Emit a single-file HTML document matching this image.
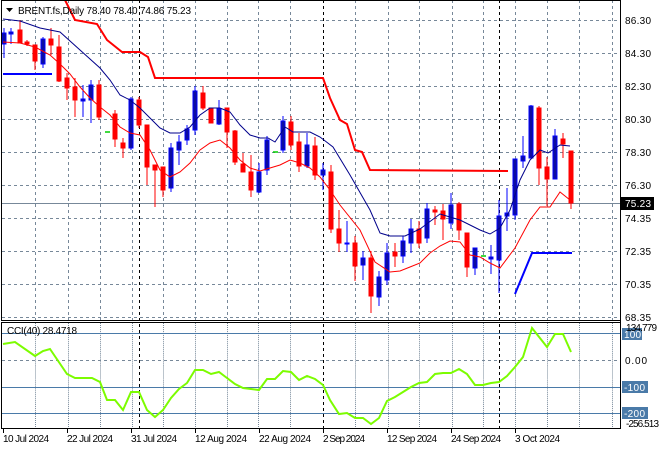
<!DOCTYPE html><html><head><style>
body{margin:0;background:#fff;}
svg{display:block;font-family:"Liberation Sans",sans-serif;font-size:10px;}
</style></head><body>
<svg width="660" height="450" xmlns="http://www.w3.org/2000/svg">
<rect width="660" height="450" fill="#fff"/>
<g stroke="#778899" stroke-dasharray="3,3" stroke-width="1">
<line x1="2" y1="20.5" x2="620" y2="20.5"/><line x1="2" y1="53.5" x2="620" y2="53.5"/><line x1="2" y1="86.5" x2="620" y2="86.5"/><line x1="2" y1="119.5" x2="620" y2="119.5"/><line x1="2" y1="152.5" x2="620" y2="152.5"/><line x1="2" y1="185.5" x2="620" y2="185.5"/><line x1="2" y1="218.5" x2="620" y2="218.5"/><line x1="2" y1="251.5" x2="620" y2="251.5"/><line x1="2" y1="284.5" x2="620" y2="284.5"/><line x1="2" y1="317.5" x2="620" y2="317.5"/>
<line x1="2" y1="360.5" x2="620" y2="360.5"/>
<g id="vg"><line x1="35.5" y1="0" x2="35.5" y2="320"/><line x1="68.5" y1="0" x2="68.5" y2="320"/><line x1="100.5" y1="0" x2="100.5" y2="320"/><line x1="132.5" y1="0" x2="132.5" y2="320"/><line x1="163.5" y1="0" x2="163.5" y2="320"/><line x1="195.5" y1="0" x2="195.5" y2="320"/><line x1="227.5" y1="0" x2="227.5" y2="320"/><line x1="258.5" y1="0" x2="258.5" y2="320"/><line x1="290.5" y1="0" x2="290.5" y2="320"/><line x1="355.5" y1="0" x2="355.5" y2="320"/><line x1="388.5" y1="0" x2="388.5" y2="320"/><line x1="419.5" y1="0" x2="419.5" y2="320"/><line x1="452.5" y1="0" x2="452.5" y2="320"/><line x1="483.5" y1="0" x2="483.5" y2="320"/><line x1="515.5" y1="0" x2="515.5" y2="320"/><line x1="547.5" y1="0" x2="547.5" y2="320"/><line x1="579.5" y1="0" x2="579.5" y2="320"/><line x1="612.5" y1="0" x2="612.5" y2="320"/></g>
<use href="#vg" transform="translate(0,323) scale(1,0.33)"/>
</g>
<g stroke="#000" stroke-dasharray="3,3"><line x1="139.5" y1="0" x2="139.5" y2="428"/><line x1="323.5" y1="0" x2="323.5" y2="428"/><line x1="499.5" y1="0" x2="499.5" y2="428"/></g>
<line x1="2" y1="203.5" x2="620" y2="203.5" stroke="#778899"/>
<g stroke="#4a7aa8"><line x1="2" y1="333.5" x2="620" y2="333.5"/><line x1="2" y1="387.5" x2="620" y2="387.5"/><line x1="2" y1="413.5" x2="620" y2="413.5"/></g>
<polyline fill="none" stroke="#f00" stroke-width="2" points="65,0 75,20 97,24 107,40 122,52 140,52 148,57 155,78 323,78 330,98 340,120 347,124 355,150 362,152 370,170 508,171"/>
<polyline fill="none" stroke="#00f" stroke-width="2" points="3,74 52,74"/>
<polyline fill="none" stroke="#00f" stroke-width="2" points="515,294 532,253 572,253"/>
<g stroke="#0c0" stroke-width="1.5"><line x1="105" y1="132" x2="110" y2="132"/><line x1="273" y1="152" x2="278" y2="152"/><line x1="481" y1="256" x2="486" y2="256"/></g>
<g stroke-width="1">
<g stroke="#f00" fill="#f00">
<line x1="20" y1="20" x2="20" y2="43"/><rect x="18" y="30" width="4" height="13"/>
<line x1="27" y1="40" x2="27" y2="46"/><rect x="25" y="42" width="4" height="2"/>
<line x1="35" y1="45" x2="35" y2="70"/><rect x="33" y="45" width="4" height="16"/>
<line x1="51" y1="28" x2="51" y2="55"/><rect x="49" y="39" width="4" height="6"/>
<line x1="59" y1="35" x2="59" y2="82"/><rect x="57" y="47" width="4" height="34"/>
<line x1="67" y1="73" x2="67" y2="100"/><rect x="65" y="78" width="4" height="10"/>
<line x1="75" y1="78" x2="75" y2="117"/><rect x="73" y="87" width="4" height="13"/>
<line x1="99" y1="80" x2="99" y2="120"/><rect x="97" y="85" width="4" height="32"/>
<line x1="115" y1="110" x2="115" y2="147"/><rect x="113" y="114" width="4" height="25"/>
<line x1="123" y1="138" x2="123" y2="158"/><rect x="121" y="143" width="4" height="5"/>
<line x1="139" y1="97" x2="139" y2="128"/><rect x="137" y="100" width="4" height="25"/>
<line x1="147" y1="125" x2="147" y2="185"/><rect x="145" y="125" width="4" height="42"/>
<line x1="155" y1="165" x2="155" y2="207"/><rect x="153" y="165" width="4" height="5"/>
<line x1="163" y1="167" x2="163" y2="197"/><rect x="161" y="167" width="4" height="23"/>
<line x1="203" y1="86" x2="203" y2="110"/><rect x="201" y="93" width="4" height="15"/>
<line x1="211" y1="108" x2="211" y2="123"/><rect x="209" y="108" width="4" height="15"/>
<line x1="227" y1="108" x2="227" y2="148"/><rect x="225" y="108" width="4" height="24"/>
<line x1="235" y1="130" x2="235" y2="165"/><rect x="233" y="131" width="4" height="31"/>
<line x1="243" y1="153" x2="243" y2="172"/><rect x="241" y="164" width="4" height="8"/>
<line x1="251" y1="155" x2="251" y2="197"/><rect x="249" y="172" width="4" height="18"/>
<line x1="291" y1="116" x2="291" y2="150"/><rect x="289" y="122" width="4" height="23"/>
<line x1="299" y1="133" x2="299" y2="172"/><rect x="297" y="142" width="4" height="24"/>
<line x1="315" y1="137" x2="315" y2="180"/><rect x="313" y="146" width="4" height="29"/>
<line x1="331" y1="165" x2="331" y2="233"/><rect x="329" y="172" width="4" height="57"/>
<line x1="339" y1="210" x2="339" y2="252"/><rect x="337" y="229" width="4" height="14"/>
<line x1="355" y1="236" x2="355" y2="281"/><rect x="353" y="243" width="4" height="23"/>
<line x1="371" y1="251" x2="371" y2="313"/><rect x="369" y="258" width="4" height="38"/>
<line x1="395" y1="243" x2="395" y2="267"/><rect x="393" y="252" width="4" height="4"/>
<line x1="419" y1="221" x2="419" y2="248"/><rect x="417" y="229" width="4" height="14"/>
<line x1="435" y1="206" x2="435" y2="225"/><rect x="433" y="210" width="4" height="2"/>
<line x1="443" y1="204" x2="443" y2="240"/><rect x="441" y="211" width="4" height="8"/>
<line x1="459" y1="202" x2="459" y2="240"/><rect x="457" y="204" width="4" height="26"/>
<line x1="467" y1="233" x2="467" y2="277"/><rect x="465" y="233" width="4" height="34"/>
<line x1="539" y1="106" x2="539" y2="185"/><rect x="537" y="108" width="4" height="60"/>
<line x1="547" y1="157" x2="547" y2="206"/><rect x="545" y="167" width="4" height="12"/>
<line x1="563" y1="133" x2="563" y2="158"/><rect x="561" y="139" width="4" height="5"/>
<line x1="571" y1="151" x2="571" y2="209"/><rect x="569" y="151" width="4" height="52"/>
</g>
<g stroke="#00f" fill="#0d0da0">
<line x1="4" y1="28" x2="4" y2="58"/><rect x="2" y="33" width="4" height="11"/>
<line x1="11" y1="28" x2="11" y2="44"/><rect x="9" y="32" width="4" height="2"/>
<line x1="43" y1="37" x2="43" y2="68"/><rect x="41" y="39" width="4" height="25"/>
<line x1="83" y1="85" x2="83" y2="117"/><rect x="81" y="99" width="4" height="2"/>
<line x1="91" y1="80" x2="91" y2="123"/><rect x="89" y="85" width="4" height="15"/>
<line x1="131" y1="97" x2="131" y2="150"/><rect x="129" y="99" width="4" height="49"/>
<line x1="171" y1="143" x2="171" y2="192"/><rect x="169" y="148" width="4" height="40"/>
<line x1="179" y1="135" x2="179" y2="165"/><rect x="177" y="142" width="4" height="8"/>
<line x1="187" y1="125" x2="187" y2="145"/><rect x="185" y="129" width="4" height="11"/>
<line x1="195" y1="86" x2="195" y2="135"/><rect x="193" y="91" width="4" height="39"/>
<line x1="219" y1="100" x2="219" y2="125"/><rect x="217" y="109" width="4" height="15"/>
<line x1="259" y1="163" x2="259" y2="193"/><rect x="257" y="172" width="4" height="20"/>
<line x1="267" y1="136" x2="267" y2="175"/><rect x="265" y="140" width="4" height="30"/>
<line x1="283" y1="116" x2="283" y2="153"/><rect x="281" y="121" width="4" height="29"/>
<line x1="307" y1="133" x2="307" y2="168"/><rect x="305" y="145" width="4" height="21"/>
<line x1="323" y1="163" x2="323" y2="190"/><rect x="321" y="170" width="4" height="5"/>
<line x1="347" y1="221" x2="347" y2="252"/><rect x="345" y="243" width="4" height="1"/>
<line x1="363" y1="251" x2="363" y2="280"/><rect x="361" y="258" width="4" height="7"/>
<line x1="379" y1="271" x2="379" y2="306"/><rect x="377" y="277" width="4" height="20"/>
<line x1="387" y1="243" x2="387" y2="285"/><rect x="385" y="253" width="4" height="27"/>
<line x1="403" y1="236" x2="403" y2="263"/><rect x="401" y="241" width="4" height="15"/>
<line x1="411" y1="219" x2="411" y2="253"/><rect x="409" y="229" width="4" height="14"/>
<line x1="427" y1="203" x2="427" y2="243"/><rect x="425" y="209" width="4" height="29"/>
<line x1="451" y1="193" x2="451" y2="229"/><rect x="449" y="205" width="4" height="18"/>
<line x1="475" y1="248" x2="475" y2="275"/><rect x="473" y="248" width="4" height="20"/>
<line x1="491" y1="245" x2="491" y2="274"/><rect x="489" y="257" width="4" height="2"/>
<line x1="499" y1="200" x2="499" y2="293"/><rect x="497" y="216" width="4" height="44"/>
<line x1="507" y1="188" x2="507" y2="231"/><rect x="505" y="213" width="4" height="3"/>
<line x1="515" y1="159" x2="515" y2="220"/><rect x="513" y="159" width="4" height="56"/>
<line x1="523" y1="136" x2="523" y2="168"/><rect x="521" y="156" width="4" height="5"/>
<line x1="531" y1="105" x2="531" y2="158"/><rect x="529" y="106" width="4" height="52"/>
<line x1="555" y1="129" x2="555" y2="179"/><rect x="553" y="136" width="4" height="43"/>
</g>
</g>
<polyline fill="none" stroke="#00008b" stroke-width="1" points="3,19 20,21 40,28 60,32 80,50 100,68 110,80 120,95 130,100 140,108 160,128 170,133 180,133 190,127 200,115 210,108 220,108 230,112 240,125 250,135 260,138 268,138 275,142 285,127 293,132 310,132 320,137 333,147 350,175 370,210 380,233 390,236 405,236 420,229 440,214 460,220 480,230 490,234 500,228 510,210 520,180 530,160 540,150 548,153 560,145 570,146"/>
<polyline fill="none" stroke="#f00" stroke-width="1" points="3,42 20,43 35,47 50,55 60,64 70,74 80,87 90,98 100,107 110,115 120,127 130,133 140,135 150,150 160,170 170,177 180,172 190,163 200,150 210,143 220,140 230,148 240,160 250,168 260,171 270,168 280,165 290,160 300,163 310,168 320,177 330,190 340,205 360,230 375,262 390,272 400,271 410,267 420,263 430,253 440,246 450,241 460,242 470,255 480,257 490,263 500,268 515,248 530,220 540,207 550,207 560,192 570,200"/>
<polyline fill="none" stroke="#7cfc00" stroke-width="2" points="3,344 15,342 35,356 43,351 50,349 67,374 75,378 92,378 100,382 107,400 115,400 123,410 131,392 139,392 147,410 155,417 163,410 171,398 179,389 187,383 195,370 203,370 211,374 219,372 227,378 235,384 243,388 251,389 259,390 267,379 275,379 283,371 291,372 299,380 307,376 315,379 323,385 330,400 339,414 347,413 355,418 363,418 371,424 379,418 387,401 395,397 403,392 411,387 419,383 427,382 435,374 443,373 451,373 459,369 467,374 475,385 483,385 491,383 499,382 507,376 515,367 523,357 532,328 547,347 555,334 563,334 571,352"/>
<g fill="none" stroke="#000" stroke-width="1">
<rect x="1.5" y="0.5" width="619" height="320"/>
<rect x="1.5" y="322.5" width="619" height="106"/>
</g>
<line x1="620.5" y1="0" x2="620.5" y2="429" stroke="#000"/>
<g fill="#000">
<text x="625" y="24" textLength="26">86.30</text><text x="625" y="57" textLength="26">84.30</text><text x="625" y="90" textLength="26">82.30</text><text x="625" y="123" textLength="26">80.30</text><text x="625" y="156" textLength="26">78.30</text><text x="625" y="189" textLength="26">76.30</text><text x="625" y="222" textLength="26">74.35</text><text x="625" y="255" textLength="26">72.35</text><text x="625" y="288" textLength="26">70.35</text><text x="625" y="321" textLength="26">68.35</text>
</g>
<rect x="621" y="197" width="33" height="13" fill="#000"/><text x="625" y="207" fill="#fff" textLength="26">75.23</text>
<rect x="622" y="328" width="20" height="12" fill="#4a7aa8"/>
<text x="626" y="331" fill="#000" textLength="31">134.779</text>
<text x="624" y="338" fill="#fff" textLength="17">100</text>
<text x="625" y="364" fill="#000" textLength="22">0.00</text>
<rect x="622" y="381" width="26" height="12" fill="#4a7aa8"/><text x="624" y="391" fill="#fff" textLength="21">-100</text>
<rect x="622" y="407" width="26" height="12" fill="#4a7aa8"/><text x="624" y="417" fill="#fff" textLength="21">-200</text>
<text x="626" y="427" fill="#000" textLength="33">-256.513</text>
<g stroke="#000"><line x1="3.5" y1="428" x2="3.5" y2="433"/><line x1="67.5" y1="428" x2="67.5" y2="433"/><line x1="131.5" y1="428" x2="131.5" y2="433"/><line x1="195.5" y1="428" x2="195.5" y2="433"/><line x1="259.5" y1="428" x2="259.5" y2="433"/><line x1="323.5" y1="428" x2="323.5" y2="433"/><line x1="387.5" y1="428" x2="387.5" y2="433"/><line x1="451.5" y1="428" x2="451.5" y2="433"/><line x1="515.5" y1="428" x2="515.5" y2="433"/></g>
<g fill="#000"><text x="3" y="442" textLength="46">10 Jul 2024</text><text x="67" y="442" textLength="46">22 Jul 2024</text><text x="131" y="442" textLength="46">31 Jul 2024</text><text x="195" y="442" textLength="52">12 Aug 2024</text><text x="259" y="442" textLength="52">22 Aug 2024</text><text x="323" y="442" textLength="42">2 Sep 2024</text><text x="387" y="442" textLength="50">12 Sep 2024</text><text x="451" y="442" textLength="50">24 Sep 2024</text><text x="515" y="442" textLength="45">3 Oct 2024</text></g>
<polygon points="6,8 13,8 9.5,12" fill="#000"/>
<text x="18" y="14" fill="#000" textLength="173">BRENT.fs,Daily  78.40 78.40 74.86 75.23</text>
<text x="7" y="334" fill="#000" textLength="70">CCI(40) 28.4718</text>
</svg>
</body></html>
